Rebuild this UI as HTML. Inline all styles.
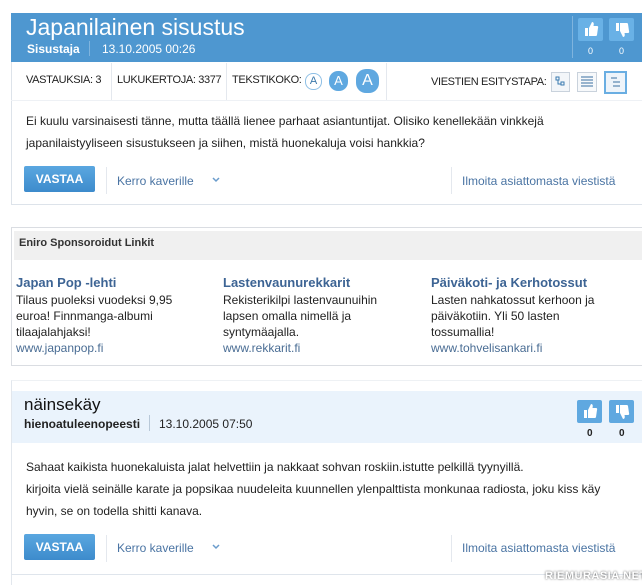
<!DOCTYPE html>
<html><head><meta charset="utf-8"><style>
*{margin:0;padding:0;box-sizing:border-box}
body{width:642px;height:585px;background:#fff;font-family:"Liberation Sans",Arial,sans-serif;color:#222;position:relative;overflow:hidden}
.a{position:absolute;white-space:nowrap}
.vote{position:absolute;width:25px;height:23px;background:#5fa8e0;border-radius:2px}
.btn{position:absolute;width:71px;height:26px;background:linear-gradient(#5aa7e0,#3d8bcc);border-radius:2px;color:#fff;font-weight:bold;font-size:12px;text-align:center;line-height:26px}
.vl{position:absolute;width:1px;background:#e4e8ee}
.link{color:#4a6d94}
.sm{font-size:11px;letter-spacing:-0.35px}
</style></head><body>
<div class="a" style="left:11px;top:13px;width:631px;height:192px;border:1px solid #dde3ea;border-right:none"></div>
<div class="a" style="left:11px;top:13px;width:631px;height:49px;background:#4e97d0"></div>
<div class="a" style="left:26px;top:14px;font-size:23px;color:#fff">Japanilainen sisustus</div>
<div class="a" style="left:27px;top:42px;font-size:12px;color:#fff;font-weight:bold">Sisustaja</div>
<div class="a" style="left:89px;top:41px;width:1px;height:15px;background:#7fb4de"></div>
<div class="a" style="left:102px;top:42px;font-size:12px;color:#fff">13.10.2005 00:26</div>
<div class="a" style="left:572px;top:16px;width:1px;height:42px;background:#7fb4de"></div>
<div class="vote" style="left:578px;top:18px;background:#69b1e6"></div>
<div class="vote" style="left:609px;top:18px;background:#69b1e6"></div>
<svg class="a" style="left:582px;top:20px" width="18" height="18" viewBox="0 0 18 18"><path d="M3 8h3v8H3zM7 8l3-6c2 0 2 2 1.5 4H15c1 0 1.5 1 1 2l-1 7c-.2 1-1 1-2 1H7z" fill="#fff"/></svg>
<svg class="a" style="left:613px;top:21px" width="18" height="18" viewBox="0 0 18 18"><path d="M3 2h3v8H3zM7 10l3 6c2 0 2-2 1.5-4H15c1 0 1.5-1 1-2l-1-7c-.2-1-1-1-2-1H7z" fill="#fff"/></svg>
<div class="a" style="left:588px;top:46px;font-size:9px;color:#fff">0</div>
<div class="a" style="left:619px;top:46px;font-size:9px;color:#fff">0</div>
<div class="a" style="left:11px;top:100px;width:631px;height:1px;background:#eef1f5"></div>
<div class="a sm" style="left:26px;top:74px">VASTAUKSIA: 3</div>
<div class="vl" style="left:111px;top:63px;height:37px"></div>
<div class="a sm" style="left:117px;top:74px">LUKUKERTOJA: 3377</div>
<div class="vl" style="left:226px;top:63px;height:37px"></div>
<div class="a sm" style="left:232px;top:74px">TEKSTIKOKO:</div>
<div class="a" style="left:305px;top:73px;width:17px;height:17px;border:1px solid #8fc0e6;border-radius:8px;font-size:11px;color:#3b78aa;text-align:center;line-height:15px">A</div>
<div class="a" style="left:329px;top:71px;width:19px;height:20px;background:#5fa8e0;border-radius:9px;font-size:13px;color:#fff;text-align:center;line-height:20px">A</div>
<div class="a" style="left:356px;top:69px;width:23px;height:24px;background:#5fa8e0;border-radius:10px;font-size:16px;color:#fff;text-align:center;line-height:24px">A</div>
<div class="vl" style="left:386px;top:63px;height:37px"></div>
<div class="a sm" style="left:431px;top:76px">VIESTIEN ESITYSTAPA:</div>
<div class="a" style="left:551px;top:72px;width:19px;height:20px;border:1px solid #c9d2dc;background:#f3f6f9"></div>
<svg class="a" style="left:551px;top:72px" width="19" height="20"><path d="M5 5h3v3H5zM7 8v4h3M10 10h3v3h-3z" stroke="#3a7ab0" fill="none" stroke-width="1"/></svg>
<div class="a" style="left:577px;top:72px;width:20px;height:20px;border:1px solid #c9d2dc;background:#f7f9fb"></div>
<svg class="a" style="left:577px;top:72px" width="20" height="20"><path d="M4 5h12M4 8h12M4 11h12M4 14h12" stroke="#3a6fa0"/></svg>
<div class="a" style="left:604px;top:71px;width:23px;height:23px;border:2px solid #6aaee2;background:#eef4fa"></div>
<svg class="a" style="left:604px;top:71px" width="23" height="23"><path d="M7 7h6M9 11h7M9 15h7" stroke="#3a6fa0"/></svg>
<div class="a" style="left:26px;top:114px;font-size:12px">Ei kuulu varsinaisesti tänne, mutta täällä lienee parhaat asiantuntijat. Olisiko kenellekään vinkkejä</div>
<div class="a" style="left:26px;top:136px;font-size:12px">japanilaistyyliseen sisustukseen ja siihen, mistä huonekaluja voisi hankkia?</div>
<div class="btn" style="left:24px;top:166px">VASTAA</div>
<div class="vl" style="left:106px;top:167px;height:27px"></div>
<div class="a" style="left:117px;top:174px;font-size:12px;color:#4a74a3">Kerro kaverille</div>
<svg class="a" style="left:212px;top:177px" width="8" height="6"><path d="M1 1l3 3 3-3" stroke="#6a9ccc" stroke-width="1.5" fill="none"/></svg>
<div class="vl" style="left:451px;top:167px;height:27px"></div>
<div class="a" style="left:462px;top:174px;font-size:12px;color:#4a74a3">Ilmoita asiattomasta viestistä</div>
<div class="a" style="left:11px;top:227px;width:631px;height:139px;border:1px solid #dadde2;border-right:none"></div>
<div class="a" style="left:14px;top:231px;width:628px;height:29px;background:#f0f0f0"></div>
<div class="a" style="left:19px;top:237px;font-size:11px;font-weight:bold;color:#333">Eniro Sponsoroidut Linkit</div>
<div class="a" style="left:16px;top:275px;font-size:13px;font-weight:bold;color:#3d6494;line-height:16px">Japan Pop -lehti</div>
<div class="a" style="left:16px;top:292px;font-size:12px;line-height:16px">Tilaus puoleksi vuodeksi 9,95<br>euroa! Finnmanga-albumi<br>tilaajalahjaksi!<br><span class="link">www.japanpop.fi</span></div>
<div class="a" style="left:223px;top:275px;font-size:13px;font-weight:bold;color:#3d6494;line-height:16px">Lastenvaunurekkarit</div>
<div class="a" style="left:223px;top:292px;font-size:12px;line-height:16px">Rekisterikilpi lastenvaunuihin<br>lapsen omalla nimellä ja<br>syntymäajalla.<br><span class="link">www.rekkarit.fi</span></div>
<div class="a" style="left:431px;top:275px;font-size:13px;font-weight:bold;color:#3d6494;line-height:16px">Päiväkoti- ja Kerhotossut</div>
<div class="a" style="left:431px;top:292px;font-size:12px;line-height:16px">Lasten nahkatossut kerhoon ja<br>päiväkotiin. Yli 50 lasten<br>tossumallia!<br><span class="link">www.tohvelisankari.fi</span></div>
<div class="a" style="left:11px;top:380px;width:631px;height:205px;border-left:1px solid #e2e7ed;border-top:1px solid #eef1f4"></div>
<div class="a" style="left:12px;top:391px;width:630px;height:52px;background:#eaf3fc"></div>
<div class="a" style="left:24px;top:395px;font-size:17px;color:#111">näinsekäy</div>
<div class="a" style="left:24px;top:417px;font-size:12px;font-weight:bold">hienoatuleenopeesti</div>
<div class="a" style="left:149px;top:415px;width:1px;height:16px;background:#b8c8d8"></div>
<div class="a" style="left:159px;top:417px;font-size:12px">13.10.2005 07:50</div>
<div class="vote" style="left:577px;top:400px"></div>
<div class="vote" style="left:609px;top:400px"></div>
<svg class="a" style="left:581px;top:402px" width="18" height="18" viewBox="0 0 18 18"><path d="M3 8h3v8H3zM7 8l3-6c2 0 2 2 1.5 4H15c1 0 1.5 1 1 2l-1 7c-.2 1-1 1-2 1H7z" fill="#fff"/></svg>
<svg class="a" style="left:613px;top:403px" width="18" height="18" viewBox="0 0 18 18"><path d="M3 2h3v8H3zM7 10l3 6c2 0 2-2 1.5-4H15c1 0 1.5-1 1-2l-1-7c-.2-1-1-1-2-1H7z" fill="#fff"/></svg>
<div class="a" style="left:587px;top:428px;font-size:10px;font-weight:bold">0</div>
<div class="a" style="left:619px;top:428px;font-size:10px;font-weight:bold">0</div>
<div class="a" style="left:26px;top:460px;font-size:12px">Sahaat kaikista huonekaluista jalat helvettiin ja nakkaat sohvan roskiin.istutte pelkillä tyynyillä.</div>
<div class="a" style="left:26px;top:482px;font-size:12px">kirjoita vielä seinälle karate ja popsikaa nuudeleita kuunnellen ylenpalttista monkunaa radiosta, joku kiss käy</div>
<div class="a" style="left:26px;top:504px;font-size:12px">hyvin, se on todella shitti kanava.</div>
<div class="btn" style="left:24px;top:534px">VASTAA</div>
<div class="vl" style="left:106px;top:535px;height:27px"></div>
<div class="a" style="left:117px;top:541px;font-size:12px;color:#4a74a3">Kerro kaverille</div>
<svg class="a" style="left:212px;top:544px" width="8" height="6"><path d="M1 1l3 3 3-3" stroke="#6a9ccc" stroke-width="1.5" fill="none"/></svg>
<div class="vl" style="left:451px;top:535px;height:27px"></div>
<div class="a" style="left:462px;top:541px;font-size:12px;color:#4a74a3">Ilmoita asiattomasta viestistä</div>
<div class="a" style="left:11px;top:574px;width:631px;height:1px;background:#dfe5ec"></div>
<div class="a" style="left:545px;top:570px;font-size:11px;font-weight:bold;color:#fff;text-shadow:0 0 2px #555;letter-spacing:0.5px">RIEMURASIA.NET</div>
</body></html>
